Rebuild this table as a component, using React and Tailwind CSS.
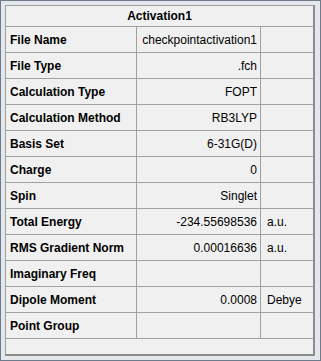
import React from 'react';

const rows = [
  ['File Name', 'checkpointactivation1', ''],
  ['File Type', '.fch', ''],
  ['Calculation Type', 'FOPT', ''],
  ['Calculation Method', 'RB3LYP', ''],
  ['Basis Set', '6-31G(D)', ''],
  ['Charge', '0', ''],
  ['Spin', 'Singlet', ''],
  ['Total Energy', '-234.55698536', 'a.u.'],
  ['RMS Gradient Norm', '0.00016636', 'a.u.'],
  ['Imaginary Freq', '', ''],
  ['Dipole Moment', '0.0008', 'Debye'],
  ['Point Group', '', ''],
];

const App = () => {
  return (
    <div
      className="w-[321px] h-[361px] border border-[#6e7b8b] bg-[#e4e7ec] pt-[4px] pl-[4px] pr-[5px] pb-[4px] text-[12px] text-black"
      style={{ fontFamily: '"Liberation Sans", Arial, sans-serif' }}
    >
      <div className="w-[310px] h-[351px] flex flex-col bg-[#f0f0f0] border-l border-t border-[#a0a0a0] border-r-2 border-b-2 border-r-[#8c8c8c] border-b-[#8c8c8c]">
        <div className="h-[21px] flex items-center justify-center font-bold border-b border-[#a0a0a0]">
          Activation1
        </div>
        {rows.map(([label, value, unit]) => (
          <div key={label} className="h-[26px] flex border-b border-[#a0a0a0]">
            <div className="w-[131px] border-r border-[#a0a0a0] flex items-center pl-[4px] font-bold">
              {label}
            </div>
            <div className="w-[124px] border-r border-[#a0a0a0] flex items-center justify-end pr-[3px]">
              {value}
            </div>
            <div className="flex-1 flex items-center pl-[6px]">{unit}</div>
          </div>
        ))}
      </div>
    </div>
  );
};

export default App;
